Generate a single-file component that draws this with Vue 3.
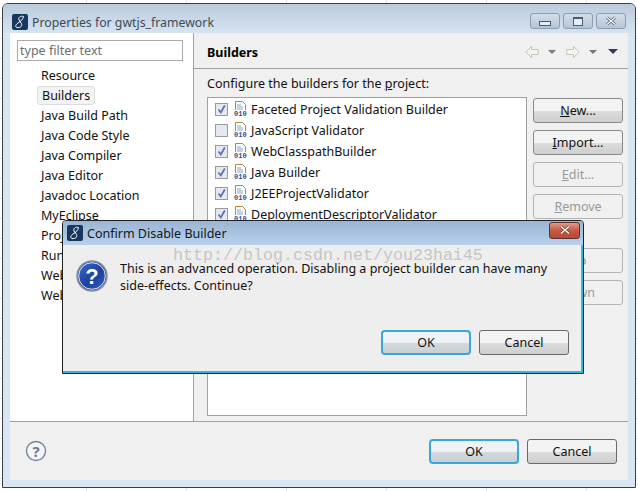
<script setup>
const tree = ['Resource','Builders','Java Build Path','Java Code Style','Java Compiler','Java Editor','Javadoc Location','MyEclipse','Project Facets','Run/Debug Settings','Web Content Settings','Web Page Editor']
const rows = [
  { name: 'Faceted Project Validation Builder', on: true },
  { name: 'JavaScript Validator', on: false },
  { name: 'WebClasspathBuilder', on: true },
  { name: 'Java Builder', on: true },
  { name: 'J2EEProjectValidator', on: true },
  { name: 'DeploymentDescriptorValidator', on: true },
]
</script>

<template>
  <div class="page">
    <div class="win">
      <div class="titlebar">
        <svg class="logo" viewBox="0 0 16 16"><rect width="16" height="16" rx="2" fill="#17375e"/><path d="M11.500 2.500C8.500 1.500 6 3.500 7 6l2.500 3.500c1 2.500-1 4.500-4.500 4C3 13 3.500 10.500 6 9c2.500-1.500 5-3.500 5.500-6.500" fill="none" stroke="#fff" stroke-width="1"/></svg>
        <span class="wtitle">Properties for gwtjs_framework</span>
        <div class="wbtns">
          <span class="wbtn"><i class="ico-min"></i></span>
          <span class="wbtn"><i class="ico-max"></i></span>
          <span class="wbtn"><svg width="12" height="10" viewBox="0 0 12 10"><path d="M2 1.500l8 7M10 1.500l-8 7" stroke="#47556a" stroke-width="2.600"/><path d="M2 1.500l8 7M10 1.500l-8 7" stroke="#fff" stroke-width="1.200"/></svg></span>
        </div>
      </div>
      <div class="client">
        <div class="main">
          <aside class="side">
            <div class="filter">type filter text</div>
            <ul class="tree">
              <li v-for="t in tree" :key="t" :class="{ sel: t === 'Builders' }"><span>{{ t }}</span></li>
            </ul>
          </aside>
          <section class="pane">
            <header class="phead">
              <b>Builders</b>
              <div class="nav">
                <svg width="14" height="12" viewBox="0 0 14 12"><path d="M6.500.5L.8 6l5.700 5.500V8.500h6.700v-5H6.500z" fill="#f4f4ec" stroke="#c6c6bc"/></svg>
                <i class="tri grey"></i>
                <svg width="14" height="12" viewBox="0 0 14 12"><path d="M7.500.5L13.200 6l-5.700 5.500V8.500H.8v-5h6.700z" fill="#f4f4ec" stroke="#c6c6bc"/></svg>
                <i class="tri grey"></i>
                <i class="tri big"></i>
              </div>
            </header>
            <div class="pbody">
              <div class="label">Configure the builders for the <u>p</u>roject:</div>
              <div class="cols">
                <div class="table">
                  <div v-for="r in rows" :key="r.name" class="row">
                    <span class="check">
                      <svg v-if="r.on" width="11" height="11" viewBox="0 0 11 11"><path d="M2.500 5.500l2.300 3 4-7" fill="none" stroke="#5a6fb0" stroke-width="1.700"/></svg>
                    </span>
                    <svg class="file" width="13" height="18" viewBox="0 0 13 18">
                      <path d="M1.500.5h7l3 3v8h-10z" fill="#fff" stroke="#b08a3c"/>
                      <path d="M3 4h4M3 6h6M3 8h6" stroke="#8aa3c8"/>
                      <rect x="0" y="9" width="13" height="6" fill="#fff"/>
                      <text x="0" y="14.500" class="bits">010</text>
                    </svg>
                    <span class="rname">{{ r.name }}</span>
                  </div>
                </div>
                <div class="btncol">
                  <button class="btn"><u>N</u>ew...</button>
                  <button class="btn"><u>I</u>mport...</button>
                  <button class="btn off"><u>E</u>dit...</button>
                  <button class="btn off"><u>R</u>emove</button>
                  <button class="btn off gap"><u>U</u>p</button>
                  <button class="btn off"><u>D</u>own</button>
                </div>
              </div>
            </div>
          </section>
        </div>
        <footer class="foot">
          <svg class="help" width="22" height="22" viewBox="0 0 22 22"><circle cx="11" cy="11" r="9.500" fill="#f4f5f8" stroke="#76849c" stroke-width="1.400"/><text x="11" y="16.500" class="q">?</text></svg>
          <div class="footbtns">
            <button class="btn def">OK</button>
            <button class="btn dark">Cancel</button>
          </div>
        </footer>
      </div>
    </div>

    <div class="dlg">
      <div class="dtitle">
        <svg class="logo" viewBox="0 0 16 16"><rect width="16" height="16" rx="2" fill="#17375e"/><path d="M11.500 2.500C8.500 1.500 6 3.500 7 6l2.500 3.500c1 2.500-1 4.500-4.500 4C3 13 3.500 10.500 6 9c2.500-1.500 5-3.500 5.500-6.500" fill="none" stroke="#fff" stroke-width="1"/></svg>
        <span class="dname">Confirm Disable Builder</span>
        <span class="close"><svg width="12" height="10" viewBox="0 0 12 10"><path d="M2 1.500l8 7M10 1.500l-8 7" stroke="#7a3428" stroke-width="2.800"/><path d="M2 1.500l8 7M10 1.500l-8 7" stroke="#fff" stroke-width="1.500"/></svg></span>
      </div>
      <div class="dbody">
        <div class="msgrow">
          <svg width="32" height="32" viewBox="0 0 32 32">
            <defs><linearGradient id="qg" x1="0" y1="0" x2="1" y2="1"><stop offset="0" stop-color="#3f6fd0"/><stop offset=".55" stop-color="#1c3f9e"/><stop offset="1" stop-color="#3a66c0"/></linearGradient></defs>
            <circle cx="16" cy="16" r="15" fill="url(#qg)" stroke="#8d939c" stroke-width="1.500"/>
            <circle cx="16" cy="16" r="13.300" fill="none" stroke="#dfe4ec" stroke-width="1"/>
            <text x="16" y="24" class="q2">?</text>
          </svg>
          <p class="msg">This is an advanced operation. Disabling a project builder can have many side-effects. Continue?</p>
        </div>
        <div class="dbtns">
          <button class="btn def">OK</button>
          <button class="btn dark">Cancel</button>
        </div>
      </div>
    </div>
    <div class="mark">http://blog.csdn.net/you23hai45</div>
  </div>
</template>

<style scoped>
.page { position: relative; width: 638px; height: 491px; overflow: hidden; background-color: #fff; background-image: repeating-linear-gradient(to bottom, transparent 0 18px, #e6e6e6 18px 19px, transparent 19px 20px), repeating-linear-gradient(to right, transparent 0 86px, #e2e2e2 86px 87px, transparent 87px 100px); font-family: "Noto Sans", sans-serif; font-size: 12.5px; color: #111; }
.win { width: 634px; height: 485px; margin: 3px 0 0 2px; box-sizing: border-box; border: 1px solid #3c3f42; border-radius: 6px 6px 0 0; background: #d8e5f2; padding: 0 7px 7px; display: flex; flex-direction: column; }
.titlebar { height: 29px; flex: none; box-sizing: border-box; margin: 0 -7px; padding: 7px 9px 0 9px; display: flex; align-items: center; background: linear-gradient(to bottom, #bccbdb, #d5e3f1); border-radius: 5px 5px 0 0; }
.logo { width: 16px; height: 16px; flex: none; }
.wtitle { margin-left: 4px; color: #3e4a56; font-size: 12.3px; }
.wbtns { margin-left: auto; display: flex; gap: 3px; margin-top: -2px; }
.wbtn { width: 30px; height: 16px; box-sizing: border-box; border: 1px solid #8c9db2; border-radius: 3px; background: linear-gradient(to bottom, #d2dde9, #b6c5d6); display: flex; align-items: center; justify-content: center; }
.ico-min { width: 10px; height: 3px; border: 1px solid #4c5a6c; background: #e6edf4; margin-top: 4px; }
.ico-max { width: 8px; height: 6px; border: 1px solid #4c5a6c; border-top-width: 2px; background: #e6edf4; }
.client { flex: 1; min-height: 0; display: flex; flex-direction: column; background: #f0f0f0; }
.main { flex: none; height: 388px; display: flex; border-bottom: 1px solid #a0a0a0; }
.side { width: 183px; flex: none; box-sizing: content-box; background: #fff; border-right: 1px solid #a0a0a0; padding-top: 7px; }
.filter { margin-left: 7px; width: 166px; height: 21px; box-sizing: border-box; border: 1px solid #ababab; color: #6e6e6e; padding-left: 2px; line-height: 19px; }
.tree { list-style: none; margin: 5px 0 0; padding: 0; }
.tree li { height: 20px; line-height: 20px; padding-left: 31px; white-space: nowrap; }
.tree li span { display: inline-block; padding: 0; }
.tree li.sel { position: relative; }
.tree li.sel span { margin-left: -4px; padding: 0 4px; height: 19px; line-height: 18px; box-sizing: border-box; border: 1px solid #dcdcdc; border-radius: 3px; background: #f3f3f3; }
.pane { flex: 1; min-width: 0; display: flex; flex-direction: column; }
.phead { height: 36px; flex: none; box-sizing: border-box; border-bottom: 1px solid #a0a0a0; padding: 3px 10px 0 13px; display: flex; align-items: center; justify-content: space-between; background: #f0f0f0; }
.phead b { font-weight: 700; color: #000; }
.nav { display: flex; align-items: center; margin-top: -1px; }
.nav svg { margin-right: 9px; }
.tri { display: block; width: 0; height: 0; border-left: 4px solid transparent; border-right: 4px solid transparent; border-top: 4px solid #77777c; margin-right: 10px; }
.tri.big { border-left-width: 5px; border-right-width: 5px; border-top: 5px solid #3b3560; margin: 0 0 0 1px; }
.pbody { flex: 1; min-height: 0; padding: 6px 5px 5px 13px; display: flex; flex-direction: column; }
.label { height: 22px; line-height: 17px; }
.cols { flex: 1; min-height: 0; display: flex; gap: 6px; }
.table { width: 320px; box-sizing: border-box; background: #fff; border: 1px solid #a0a0a0; padding-top: 1px; overflow: hidden; }
.row { height: 21px; display: flex; align-items: center; padding-left: 7px; }
.check { width: 11px; height: 11px; box-sizing: content-box; border: 1px solid #9a9a9a; background: #e4e8ef; flex: none; display: flex; }
.file { margin-left: 6px; flex: none; }
.bits { font: 700 7px "Liberation Mono", monospace; fill: #2f4f8a; }
.rname { margin-left: 4px; white-space: nowrap; }
.btncol { width: 90px; display: flex; flex-direction: column; gap: 7px; margin-top: 1px; }
.btn { width: 90px; height: 25px; box-sizing: border-box; flex: none; padding: 0; border: 1px solid #8a8a8a; border-radius: 3px; background: linear-gradient(to bottom, #f3f3f3 0 50%, #dcdcdc 50%, #cfcfcf 100%); font: inherit; color: #111; }
.btn.off { background: #f0f0f0; border-color: #b4b4b4; color: #9a9a9a; }
.btn.gap { margin-top: 22px; }
.foot { flex: 1; display: flex; align-items: center; justify-content: space-between; padding: 0 11px 0 15px; }
.help { margin-top: -1px; }
.q { font: 700 15px "Noto Sans", sans-serif; fill: #6d7a92; text-anchor: middle; }
.footbtns { display: flex; gap: 8px; }
.btn.def { border: 2px solid #3ba7d8; border-radius: 4px; background: linear-gradient(to bottom, #eef2f5 0 50%, #d3dade 50%, #c9d0d4 100%); }
.btn.dark { border-color: #6a6a6a; }
.dlg { position: absolute; left: 62px; top: 220px; width: 522px; height: 154px; box-sizing: border-box; border: 1px solid #1e2226; border-radius: 4px 4px 0 0; background: #eee; display: flex; flex-direction: column; box-shadow: inset -2px -2px 0 #35b8dc; }
.dtitle { height: 24px; flex: none; display: flex; align-items: center; padding-left: 4px; background: linear-gradient(to bottom, #9ab5d4, #b9d0ea); border-radius: 3px 3px 0 0; }
.dname { margin-left: 4px; color: #101820; }
.close { margin-left: auto; margin-right: 3px; margin-top: -6px; width: 31px; height: 17px; box-sizing: border-box; border: 1px solid #5a3030; border-radius: 3px; background: linear-gradient(to bottom, #e09a88, #c65a44 50%, #b84a34); display: flex; align-items: center; justify-content: center; }
.dbody { flex: 1; padding: 15px 12px 16px 13px; display: flex; flex-direction: column; margin-right: 2px; margin-bottom: 2px; }
.msgrow { display: flex; }
.msg { margin: 0 0 0 12px; width: 440px; line-height: 17px; color: #111; }
.dbtns { margin-top: auto; display: flex; justify-content: flex-end; gap: 8px; }
.q2 { font: 700 22px "Liberation Sans", sans-serif; fill: #fff; text-anchor: middle; }
.mark { position: absolute; left: 173px; top: 246px; font: 16.67px/20px "Liberation Mono", monospace; color: #c6c6c6; white-space: nowrap; }
</style>
